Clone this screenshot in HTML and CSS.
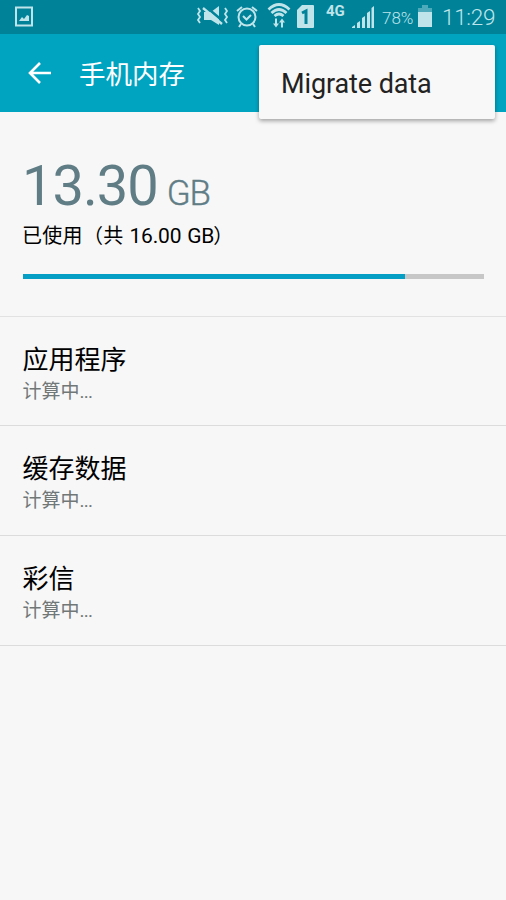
FILE: index.html
```html
<!DOCTYPE html>
<html lang="zh-CN">
<head>
<meta charset="utf-8">
<title>手机内存</title>
<link rel="stylesheet" href="styles.css">
</head>
<body>
<div class="status">
  <svg class="photo" width="18" height="21" viewBox="0 0 18 21"><path d="M1 1.500h16v18H1z" fill="none" stroke="currentColor" stroke-width="2"/><path d="M4 15l3-4 2 2 3-4 2 1v5z" fill="currentColor"/></svg>
  <svg class="mute" width="33" height="22" viewBox="0 0 33 22"><path d="M8 7h7l8-6v19l-8-5H8z" fill="currentColor"/><path d="M9 1l19 16" stroke="#008299" stroke-width="2.500"/><path d="M7 3l19 16" stroke="currentColor" stroke-width="2.400"/><path d="M2 3l2 3-2 3 2 3-2 3 2 3M29 3l2 3-2 3 2 3-2 3 2 3" fill="none" stroke="currentColor" stroke-width="1.800"/></svg>
  <svg class="alarm" width="22" height="23" viewBox="0 0 22 23"><g fill="none" stroke="currentColor" stroke-width="2"><circle cx="11" cy="12" r="8.500"/><path d="M7 11l3.500 3.500L15 10M1 6l5-4M21 6l-5-4M5 19l-2 3M17 19l2 3"/></g></svg>
  <svg class="wifi" width="24" height="26" viewBox="0 0 24 26"><g fill="none" stroke="currentColor" stroke-width="2.700"><path d="M1.500 6.500Q12-3.500 22.500 6.500M4.500 10Q12 3 19.500 10M7.500 13Q12 9 16.500 13"/></g><path d="M8 15.500h2v5h2l-3 4-3-4h2zM14 24.500v-5h-2l3-4 3 4h-2v5z" fill="currentColor"/></svg>
  <svg class="sim" width="17" height="23" viewBox="0 0 17 23"><path d="M5 0h11q1 0 1 1v21q0 1-1 1H1q-1 0-1-1V5z" fill="currentColor"/><path d="M5 8l4-2v13" fill="none" stroke="#008299" stroke-width="3"/></svg>
  <span class="network">4G</span>
  <svg class="signal" width="23" height="22" viewBox="0 0 23 22"><path d="M0 21l3-2v3H0zM5 17l3-2v7H5zM10 12l3-2v12h-3zM15 7l3-2v17h-3zM19.500 2L22 0v22h-2.500z" fill="currentColor"/></svg>
  <span class="percent">78%</span>
  <svg class="battery" width="14" height="22" viewBox="0 0 14 22"><path d="M4 0h6v3h4v4H0V3h4z" fill="currentColor" opacity=".4"/><path d="M0 7h14v15H0z" fill="currentColor"/></svg>
  <span class="clock">11:29</span>
</div>
<header class="bar">
  <svg class="back" width="24" height="24" viewBox="0 0 24 24"><path d="M23 12H2M12 2L2 12l10 10" fill="none" stroke="currentColor" stroke-width="2.600"/></svg>
  <h1>手机内存</h1>
  <div class="menu">Migrate data</div>
</header>
<main>
  <section class="usage">
    <div class="amount"><span class="number">13.30</span><span class="unit">GB</span></div>
    <div class="total"><span class="cn">已使用（共</span> 16.00 GB<span class="cn close">）</span></div>
    <div class="track"><div class="fill"></div></div>
  </section>
  <section class="row first"><h2>应用程序</h2><p>计算中<span class="dots">...</span></p></section>
  <section class="row"><h2>缓存数据</h2><p>计算中<span class="dots">...</span></p></section>
  <section class="row"><h2>彩信</h2><p>计算中<span class="dots">...</span></p></section>
</main>
</body>
</html>
```
FILE: styles.css
```css
* { box-sizing: border-box; }
body { margin: 0; min-height: 900px; background: #f7f7f7; font-family: Roboto, "Noto Sans CJK SC", sans-serif; color: #000; overflow: hidden; }
h1, h2, p { margin: 0; font-weight: 400; white-space: nowrap; }
svg { display: block; flex: none; }
.status { height: 34px; display: flex; align-items: flex-start; background: #008299; color: #bfe5ea; white-space: nowrap; }
.photo { margin: 6px 0 0 15px; }
.mute { margin: 5px 0 0 163px; }
.alarm { margin: 5px 0 0 7px; }
.wifi { margin: 3px 0 0 9px; }
.sim { margin: 5px 0 0 6px; }
.network { width: 20px; margin: 2px 0 0 12px; font-size: 15px; line-height: 18px; font-weight: 700; }
.signal { margin: 6px 0 0 6px; }
.percent { width: 32px; margin: 8px 0 0 7px; font-size: 17px; line-height: 20px; font-weight: 300; }
.battery { margin: 5px 0 0 4px; }
.clock { margin: 4px 0 0 10px; font-size: 22.5px; letter-spacing: -.3px; line-height: 27px; font-weight: 300; }
.bar { position: relative; height: 78px; display: flex; align-items: center; background: #00a4c1; color: #fff; }
.back { margin-left: 28px; }
.bar h1 { margin: 4px 0 0 27px; font-size: 26.5px; line-height: 38px; }
.menu { position: absolute; top: 11px; right: 11px; width: 236px; height: 74px; padding-left: 22px; border-radius: 2px; background: #f8f8f8; color: #222; font-size: 27px; letter-spacing: -.1px; line-height: 79px; box-shadow: 0 2px 4px rgba(0,0,0,.35); }
.usage { height: 205px; padding: 41px 22px 0; border-bottom: 1px solid #e2e2e2; }
.amount { display: flex; align-items: baseline; height: 66px; line-height: 66px; color: #607d86; white-space: nowrap; }
.number { font-size: 56px; letter-spacing: -1px; }
.unit { margin-left: 9px; font-size: 35px; letter-spacing: -1px; font-weight: 300; -webkit-text-stroke: .4px #607d86; }
.total { height: 30px; margin-top: 2px; font-size: 21px; line-height: 30px; white-space: nowrap; letter-spacing: -.2px; word-spacing: 1px; }
.cn { font-size: 20px; letter-spacing: .3px; }
.close { margin-left: -1px; }
.track { height: 5px; margin: 23px 0 0 1px; background: #c7c7c7; }
.fill { width: 82.900%; height: 5px; background: #059fc5; }
.row { height: 110px; padding: 24px 22.5px 0; border-bottom: 1px solid #dcdcdc; }
.first { height: 109px; }
.row h2 { font-size: 26px; line-height: 38px; }
.row p { font-size: 19px; line-height: 26px; color: #717777; }
.dots { letter-spacing: -.8px; }
```
